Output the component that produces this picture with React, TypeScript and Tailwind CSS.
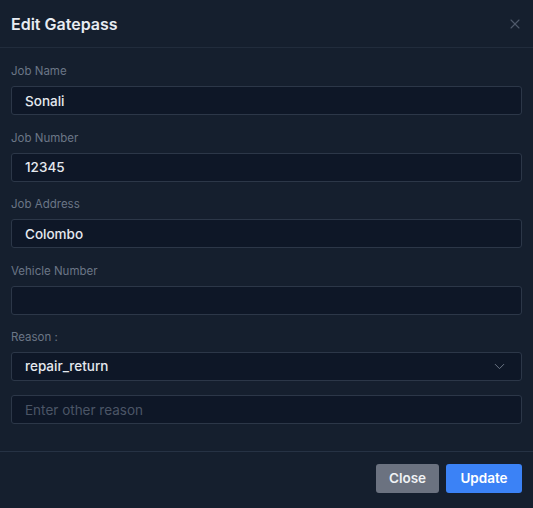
import { X, ChevronDown } from "lucide-react";

const FONT = { fontFamily: "Inter, 'Noto Sans', sans-serif" };

const Field = ({ label, value, placeholder }: { label: string; value?: string; placeholder?: string }) => (
  <div className="flex flex-col">
    <label className="text-[11.5px] text-[#6b7686] leading-none h-[13px] mb-[7px]">{label}</label>
    <input
      readOnly
      value={value ?? ""}
      placeholder={placeholder}
      className="h-[29px] w-full rounded-[3px] border border-[#2c3748] bg-[#0e1727] px-[13px] text-[13.5px] font-medium text-[#e5e9ef] placeholder:text-[#4b5566] outline-none"
    />
  </div>
);

export default function App() {
  return (
    <div className="flex h-[508px] w-[533px] flex-col bg-[#151f2e]" style={FONT}>
      <div className="flex h-[48px] items-center justify-between border-b border-[#212c3c] pl-[11px] pr-[10px]">
        <h2 className="text-[16px] font-semibold text-[#e8ecf2]">Edit Gatepass</h2>
        <X className="h-[16px] w-[16px] text-[#4f5a6b]" strokeWidth={1.6} />
      </div>
      <div className="flex flex-col gap-[16px] px-[11px] pt-[18px] pb-[27px] border-b border-[#263244]">
        <div className="flex flex-col gap-[17.5px]">
          <Field label="Job Name" value="Sonali" />
          <Field label="Job Number" value="12345" />
          <Field label="Job Address" value="Colombo" />
          <Field label="Vehicle Number" />
          <div className="flex flex-col">
            <label className="text-[11.5px] text-[#6b7686] leading-none h-[13px] mb-[7px]">Reason :</label>
            <div className="flex h-[29px] items-center justify-between rounded-[3px] border border-[#2c3748] bg-[#0e1727] pl-[13px] pr-[13px]">
              <span className="text-[13.5px] font-medium text-[#e5e9ef]">repair_return</span>
              <ChevronDown className="h-[17px] w-[17px] text-[#6b7686]" strokeWidth={1.4} />
            </div>
          </div>
        </div>
        <input
          readOnly
          placeholder="Enter other reason"
          className="-mt-[2px] h-[29px] w-full rounded-[3px] border border-[#2c3748] bg-[#0e1727] px-[13px] text-[13.5px] text-[#e5e9ef] placeholder:text-[#4b5566] outline-none"
        />
      </div>
      <div className="flex justify-end gap-[7px] px-[11px] pt-[12px]">
        <button className="h-[29px] w-[63px] rounded-[3px] bg-[#6b7280] text-[13.5px] font-semibold text-[#f0f2f5]">Close</button>
        <button className="h-[29px] w-[76px] rounded-[3px] bg-[#3b82f6] text-[13.5px] font-semibold text-white">Update</button>
      </div>
    </div>
  );
}
